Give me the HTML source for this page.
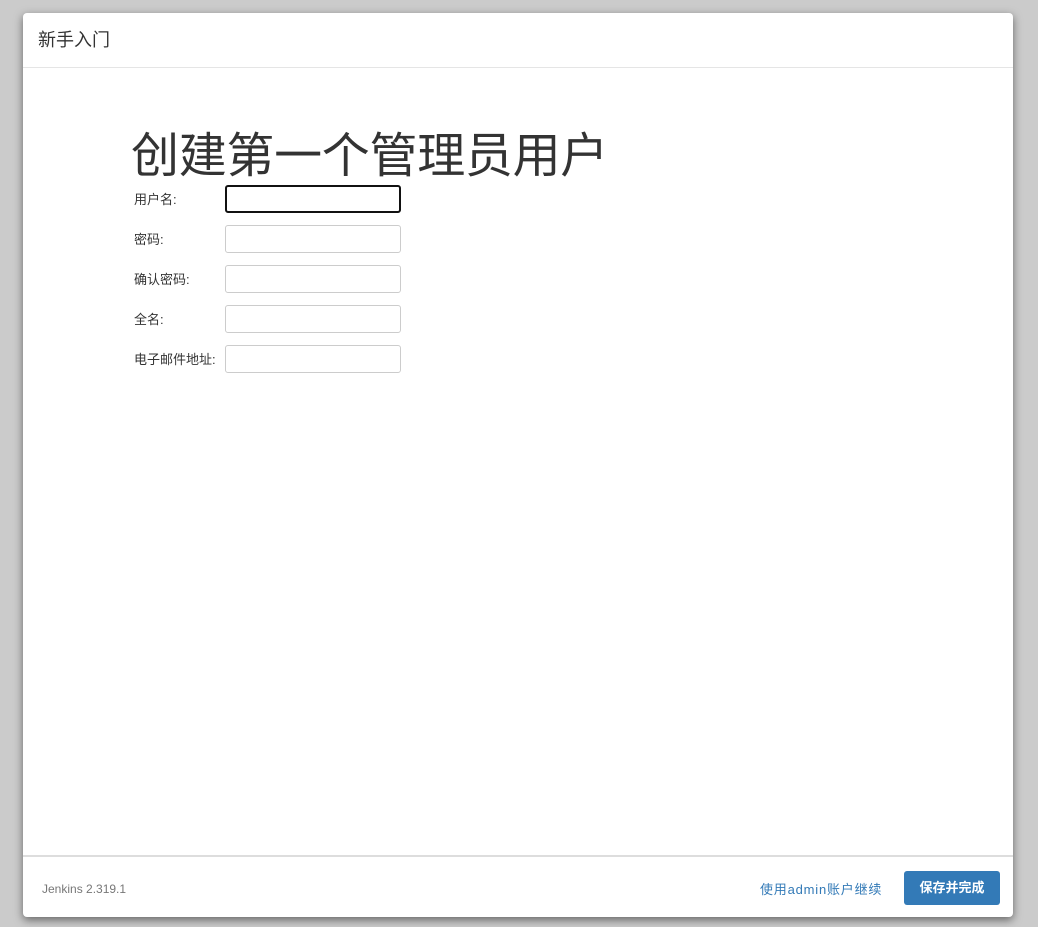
<!DOCTYPE html>
<html><head><meta charset="utf-8"><style>
body{margin:0;width:1038px;height:927px;background:#cbcbcb;font-family:"Liberation Sans","Noto Sans CJK SC",sans-serif;position:relative;overflow:hidden}
.m{position:absolute;left:23px;top:13px;width:990px;height:904px;background:#fff;border-radius:4px;box-shadow:0 3px 9px rgba(0,0,0,.5)}
.hd{height:54px;border-bottom:1px solid #e5e5e5;font-size:18px;color:#333;line-height:55px;padding-left:15px}
h1{position:absolute;left:108px;top:104px;margin:0;font-size:48px;font-weight:normal;color:#333;line-height:80px;letter-spacing:-0.3px}
.lb{position:absolute;left:111px;font-size:13px;color:#333}
.in{position:absolute;left:202px;width:174px;height:26px;border:1px solid #ccc;border-radius:3px}
.ft{position:absolute;left:0;right:0;top:842px;height:62px;border-top:2px solid #ddd}
.v{position:absolute;left:19px;top:25px;font-size:12px;color:#777}
.a{position:absolute;left:737px;top:22px;font-size:13px;color:#337ab7;letter-spacing:0.8px}
.b{position:absolute;left:881px;top:14px;width:96px;height:34px;background:#337ab7;border-radius:3px;color:#fff;font-size:13px;font-weight:bold;text-align:center;line-height:34px}
</style></head><body>
<div class="m">
<div class="hd">新手入门</div>
<h1>创建第一个管理员用户</h1>
<div class="lb" style="top:176px">用户名:</div><div class="in" style="top:172px;border:2px solid #111;width:172px;height:24px"></div>
<div class="lb" style="top:216px">密码:</div><div class="in" style="top:212px"></div>
<div class="lb" style="top:256px">确认密码:</div><div class="in" style="top:252px"></div>
<div class="lb" style="top:296px">全名:</div><div class="in" style="top:292px"></div>
<div class="lb" style="top:336px">电子邮件地址:</div><div class="in" style="top:332px"></div>
<div class="ft"><div class="v">Jenkins 2.319.1</div><div class="a">使用admin账户继续</div><div class="b">保存并完成</div></div>
</div>
</body></html>
